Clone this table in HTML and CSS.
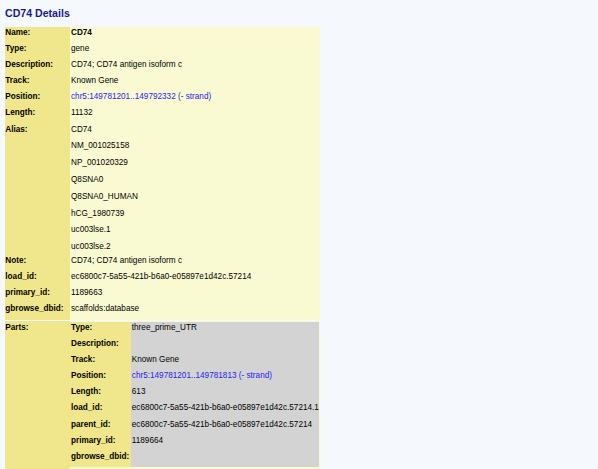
FILE: index.html
```html
<!DOCTYPE html>
<html>
<head>
<meta charset="utf-8">
<link rel="stylesheet" href="styles.css">
<title>CD74 Details</title>
</head>
<body>
<div class="page">
  <h1 class="title">CD74 Details</h1>
  <table class="details">
    <tr><th>Name:</th><td class="strong">CD74</td></tr>
    <tr><th>Type:</th><td>gene</td></tr>
    <tr><th>Description:</th><td>CD74; CD74 antigen isoform c</td></tr>
    <tr><th>Track:</th><td>Known Gene</td></tr>
    <tr><th>Position:</th><td><a class="link" href="#">chr5:149781201..149792332 (- strand)</a></td></tr>
    <tr><th>Length:</th><td>11132</td></tr>
    <tr class="alias-row"><th>Alias:</th><td>
      <div class="alias">CD74</div>
      <div class="alias">NM_001025158</div>
      <div class="alias">NP_001020329</div>
      <div class="alias">Q8SNA0</div>
      <div class="alias">Q8SNA0_HUMAN</div>
      <div class="alias">hCG_1980739</div>
      <div class="alias">uc003lse.1</div>
      <div class="alias">uc003lse.2</div>
    </td></tr>
    <tr><th>Note:</th><td>CD74; CD74 antigen isoform c</td></tr>
    <tr><th>load_id:</th><td>ec6800c7-5a55-421b-b6a0-e05897e1d42c.57214</td></tr>
    <tr><th>primary_id:</th><td>1189663</td></tr>
    <tr><th>gbrowse_dbid:</th><td>scaffolds:database</td></tr>
    <tr class="parts-row"><th>Parts:</th><td class="parts-cell">
      <table class="sub">
        <tr><th>Type:</th><td>three_prime_UTR</td></tr>
        <tr><th>Description:</th><td></td></tr>
        <tr><th>Track:</th><td>Known Gene</td></tr>
        <tr><th>Position:</th><td><a class="link" href="#">chr5:149781201..149781813 (- strand)</a></td></tr>
        <tr><th>Length:</th><td>613</td></tr>
        <tr><th>load_id:</th><td class="nowrap">ec6800c7-5a55-421b-b6a0-e05897e1d42c.57214.1</td></tr>
        <tr><th>parent_id:</th><td>ec6800c7-5a55-421b-b6a0-e05897e1d42c.57214</td></tr>
        <tr><th>primary_id:</th><td>1189664</td></tr>
        <tr><th>gbrowse_dbid:</th><td></td></tr>
      </table>
    </td></tr>
  </table>
</div>
</body>
</html>
```

FILE: styles.css
```css
html, body {
  margin: 0;
  padding: 0;
  background: #f5f8fc;
}

body {
  font-family: "Liberation Sans", Arial, sans-serif;
  color: #000;
}

.page {
  padding: 7px 5px 0 5px;
}

.title {
  margin: 0 0 8px 0;
  font-size: 10.6px;
  line-height: 12px;
  font-weight: bold;
  color: #1a1a86;
}

.details {
  border-collapse: collapse;
  border-spacing: 0;
  width: 315px;
  table-layout: fixed;
  font-size: 8.2px;
}

.details th,
.details td {
  padding: 0;
  height: 16.1px;
  line-height: 11.4px;
  vertical-align: top;
  text-align: left;
  white-space: nowrap;
}

.details > tbody > tr > th {
  width: 65px;
  background: #f0e68c;
  font-weight: bold;
  padding-left: 0.3px;
}

.details > tbody > tr > td {
  background: #fafad2;
  padding-left: 0.7px;
}

.strong {
  font-weight: bold;
}

.link {
  color: #2424f0;
  text-decoration: none;
}

.alias {
  line-height: 11.4px;
  margin-bottom: 5.4px;
}

.alias:last-child {
  margin-bottom: 2.6px;
}

.parts-row > th,
.parts-row > td {
  border-top: 1px solid #f8fafa;
}

.details > tbody > tr.parts-row > th {
  padding-top: 1.3px;
}

.details > tbody > tr.parts-row > td.parts-cell {
  padding: 1px 1px 1.5px 0;
}

.sub {
  border-collapse: collapse;
  border-spacing: 0;
  width: 249px;
  table-layout: fixed;
  font-size: 8.2px;
}

.sub th,
.sub td {
  padding: 0;
  height: 16.2px;
  line-height: 11.4px;
  vertical-align: top;
  text-align: left;
  white-space: nowrap;
  overflow: hidden;
}

.sub th {
  width: 60.5px;
  background: #f0e68c;
  font-weight: bold;
  padding-left: 0.7px;
}

.sub td {
  background: #d3d3d3;
  padding-left: 0.3px;
}
```
